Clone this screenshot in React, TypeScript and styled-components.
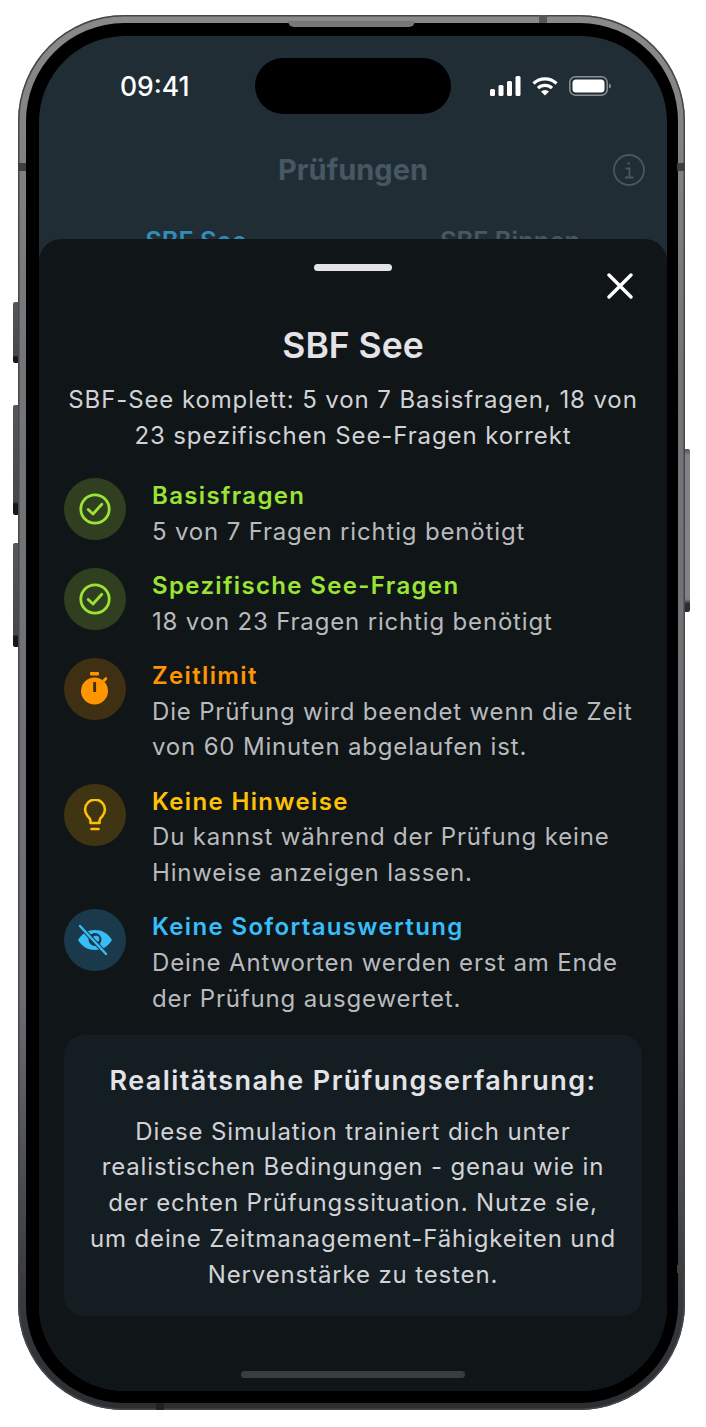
import React from "react";
import styled, { createGlobalStyle } from "styled-components";

const GlobalStyle = createGlobalStyle`
  html, body {
    margin: 0;
    padding: 0;
    background: #fff;
    font-family: "Inter", "Liberation Sans", sans-serif;
  }
`;

const GREEN = "#9be335";
const ORANGE = "#ff9500";
const YELLOW = "#ffc107";
const BLUE = "#38bdf8";
const MUTED = "#465862";

const CheckIcon = ({ color }: { color: string }) => (
  <svg width="32" height="32" viewBox="0 0 32 32" fill="none" stroke={color} strokeWidth="2.8" strokeLinecap="round" strokeLinejoin="round">
    <circle cx="16" cy="16" r="14.2" />
    <path d="M9.2 16.5 14 21l8.8-9.8" />
  </svg>
);

const TimerIcon = ({ color }: { color: string }) => (
  <svg width="32" height="36" viewBox="0 0 32 36">
    <rect x="11" y="1" width="9" height="3.400" rx="1" fill={color} />
    <circle cx="15.500" cy="20" r="13.500" fill={color} />
    <path d="m25 9.500 1.800-1.800" stroke={color} strokeWidth="3" strokeLinecap="round" />
    <rect x="14.200" y="11" width="2.900" height="10" fill="#3f3013" />
  </svg>
);

const BulbIcon = ({ color }: { color: string }) => (
  <svg width="24" height="32" viewBox="0 0 24 32" fill="none" stroke={color} strokeWidth="2.600" strokeLinecap="round" strokeLinejoin="round">
    <path d="M7.500 24v-2.200c0-1.800-1.200-3.200-3-4.800a9.900 9.900 0 1 1 15 0c-1.800 1.600-3 3-3 4.800V24Z" />
    <path d="M8.500 30h7" />
  </svg>
);

const EyeOffIcon = ({ color }: { color: string }) => (
  <svg width="36" height="32" viewBox="0 0 36 32">
    <path d="M1 16C5.500 9 11 6 18 6S30.500 9 35 16C30.500 23 25 26 18 26S5.500 23 1 16Z" fill={color} />
    <circle cx="18" cy="15.500" r="6.500" fill="#1a3a4b" />
    <circle cx="19" cy="15" r="3.300" fill={color} />
    <path d="M3 2 29 30" stroke="#1a3a4b" strokeWidth="4.400" />
    <path d="M3 2 29 30" stroke={color} strokeWidth="2.400" strokeLinecap="round" />
  </svg>
);

const InfoIcon = () => (
  <svg width="32" height="32" viewBox="0 0 32 32" fill="none" stroke={MUTED} strokeWidth="1.800">
    <circle cx="16" cy="16" r="15" />
    <path d="M12.500 14.500H16.500V23M12 23.500H20.500" />
    <circle cx="15.800" cy="9.500" r="1.300" fill={MUTED} stroke="none" />
  </svg>
);

const CloseIcon = () => (
  <svg width="26" height="26" viewBox="0 0 26 26" fill="none" stroke="#fff" strokeWidth="3.400" strokeLinecap="round">
    <path d="M2 2 24 24M24 2 2 24" />
  </svg>
);

const SignalIcon = () => (
  <svg width="31" height="20" viewBox="0 0 31 20" fill="#fff">
    <rect x="0" y="13" width="5" height="7" rx="1.500" />
    <rect x="8.500" y="9" width="5" height="11" rx="1.500" />
    <rect x="17" y="5" width="5" height="15" rx="1.500" />
    <rect x="25.500" y="0" width="5" height="20" rx="1.500" />
  </svg>
);

const WifiIcon = () => (
  <svg width="26" height="19" viewBox="0 0 26 19" fill="none" stroke="#fff" strokeWidth="3.200">
    <path d="M1.500 6.500a16.500 16.500 0 0 1 23 0" />
    <path d="M6 11.200a10 10 0 0 1 14 0" />
    <path d="M13 18.600 9 14.500a5.800 5.800 0 0 1 8 0Z" fill="#fff" stroke="none" />
  </svg>
);

const BatteryIcon = () => (
  <svg width="42" height="20" viewBox="0 0 42 20">
    <rect x="0.800" y="0.800" width="37.400" height="18.400" rx="5.500" fill="none" stroke="#8b9196" strokeWidth="1.500" />
    <rect x="3.500" y="3.500" width="32" height="13" rx="3.500" fill="#fff" />
    <path d="M40 7.500c1.300.4 2 1.300 2 2.500s-.7 2.100-2 2.500Z" fill="#8b9196" />
  </svg>
);

const rules = [
  { tone: GREEN, wash: "#303f20", icon: <CheckIcon color={GREEN} />, title: "Basisfragen", text: "5 von 7 Fragen richtig benötigt" },
  { tone: GREEN, wash: "#303f20", icon: <CheckIcon color={GREEN} />, title: "Spezifische See-Fragen", text: "18 von 23 Fragen richtig benötigt" },
  { tone: ORANGE, wash: "#3f3013", icon: <TimerIcon color={ORANGE} />, title: "Zeitlimit", text: "Die Prüfung wird beendet wenn die Zeit von 60 Minuten abgelaufen ist." },
  { tone: YELLOW, wash: "#403513", icon: <BulbIcon color={YELLOW} />, title: "Keine Hinweise", text: "Du kannst während der Prüfung keine Hinweise anzeigen lassen." },
  { tone: BLUE, wash: "#1a3a4b", icon: <EyeOffIcon color={BLUE} />, title: "Keine Sofortauswertung", text: "Deine Antworten werden erst am Ende der Prüfung ausgewertet." },
];

const App = () => {
  return (
    <Page>
      <GlobalStyle />
      <Frame>
        <VolumeKey $top={287} $height={61} />
        <VolumeKey $top={390} $height={110} />
        <VolumeKey $top={528} $height={104} />
        <PowerKey />
        <Speaker />
        <TopBand />
        <BottomBand />
        <Band $side="left" $top={148} />
        <Band $side="right" $top={148} />
        <Band $side="left" $top={1250} />
        <Band $side="right" $top={1250} />
        <Bezel>
          <Screen>
            <Island />
            <Backdrop>
              <StatusBar>
                <Clock>09:41</Clock>
                <StatusIcons>
                  <SignalIcon />
                  <WifiIcon />
                  <BatteryIcon />
                </StatusIcons>
              </StatusBar>
              <NavBar>
                <NavTitle>Prüfungen</NavTitle>
                <InfoSlot>
                  <InfoIcon />
                </InfoSlot>
              </NavBar>
              <Tabs>
                <Tab $active>SBF See</Tab>
                <Tab>SBF Binnen</Tab>
              </Tabs>
            </Backdrop>
            <Sheet>
              <Handle />
              <CloseButton>
                <CloseIcon />
              </CloseButton>
              <SheetTitle>SBF See</SheetTitle>
              <Intro>SBF-See komplett: 5 von 7 Basisfragen, 18 von 23 spezifischen See-Fragen korrekt</Intro>
              <RuleList>
                {rules.map((rule) => (
                  <Rule key={rule.title}>
                    <Badge $wash={rule.wash}>{rule.icon}</Badge>
                    <div>
                      <RuleTitle $tone={rule.tone}>{rule.title}</RuleTitle>
                      <RuleText>{rule.text}</RuleText>
                    </div>
                  </Rule>
                ))}
              </RuleList>
              <Callout>
                <CalloutTitle>Realitätsnahe Prüfungserfahrung:</CalloutTitle>
                <CalloutText>
                  Diese Simulation trainiert dich unter realistischen Bedingungen - genau wie in der echten
                  Prüfungssituation. Nutze sie, um deine Zeitmanagement-Fähigkeiten und Nervenstärke zu testen.
                </CalloutText>
              </Callout>
              <HomeIndicator />
            </Sheet>
          </Screen>
        </Bezel>
      </Frame>
    </Page>
  );
};

const Page = styled.div`
  width: 706px;
  height: 1427px;
  padding: 15px 0 0 18px;
  box-sizing: border-box;
  overflow: hidden;
`;

const Frame = styled.div`
  position: relative;
  width: 667px;
  height: 1395px;
  box-sizing: border-box;
  padding: 8px 7px 7px 8px;
  border-radius: 106px;
  background: linear-gradient(180deg, #8a8a8a 0%, #747577 25%, #6c6e71 70%, #3a3d40 90%, #2b2e30 100%);
  box-shadow: inset 0 0 0 1.500px #45474a;
`;

const Bezel = styled.div`
  height: 100%;
  box-sizing: border-box;
  padding: 13px 11px 12px 13px;
  border-radius: 98px;
  background: #000;
`;

const Screen = styled.div`
  position: relative;
  display: flex;
  flex-direction: column;
  height: 100%;
  border-radius: 86px;
  overflow: hidden;
  background: #212d35;
`;

const VolumeKey = styled.div<{ $top: number; $height: number }>`
  position: absolute;
  left: -5px;
  top: ${(p) => p.$top}px;
  width: 5px;
  height: ${(p) => p.$height}px;
  border-radius: 2px 0 0 2px;
  background: linear-gradient(180deg, #55585b 0%, #45484b 88%, #15181a 90%);
`;

const PowerKey = styled.div`
  position: absolute;
  right: -5px;
  top: 434px;
  width: 5px;
  height: 163px;
  border-radius: 0 2px 2px 0;
  background: linear-gradient(180deg, #505356 0%, #808285 4%, #808285 92%, #2c2f31 95%);
`;

const Speaker = styled.div`
  position: absolute;
  left: 270px;
  top: 6px;
  width: 127px;
  height: 6px;
  border-radius: 0 0 6px 6px;
  background: #77787a;
`;

const Band = styled.div<{ $side: "left" | "right"; $top: number }>`
  position: absolute;
  ${(p) => p.$side}: 0;
  top: ${(p) => p.$top}px;
  width: 8px;
  height: 8px;
  background: #3d3f41;
`;

const TopBand = styled.div`
  position: absolute;
  left: 521px;
  top: 0;
  width: 8px;
  height: 8px;
  background: #55575a;
`;

const BottomBand = styled.div`
  position: absolute;
  left: 138px;
  bottom: 0;
  width: 8px;
  height: 7px;
  background: #1f2123;
`;

const Island = styled.div`
  position: absolute;
  left: 216px;
  top: 22px;
  width: 196px;
  height: 56px;
  border-radius: 28px;
  background: #000;
`;

const Backdrop = styled.div`
  flex: 0 0 203px;
  overflow: hidden;
`;

const StatusBar = styled.div`
  display: flex;
  align-items: center;
  justify-content: space-between;
  height: 44px;
  padding: 28px 56px 0 81px;
`;

const Clock = styled.span`
  color: #fff;
  font-size: 26.500px;
  font-weight: 500;
`;

const StatusIcons = styled.div`
  display: flex;
  align-items: center;
  gap: 11px;
`;

const NavBar = styled.div`
  position: relative;
  display: flex;
  justify-content: center;
  margin-top: 42px;
`;

const NavTitle = styled.h1`
  margin: 0;
  color: ${MUTED};
  font-size: 29px;
  line-height: 40px;
  font-weight: 700;
`;

const InfoSlot = styled.div`
  position: absolute;
  right: 22px;
  top: 4px;
  display: flex;
`;

const Tabs = styled.div`
  display: grid;
  grid-template-columns: 314px 314px;
  margin-top: 36px;
`;

const Tab = styled.div<{ $active?: boolean }>`
  color: ${(p) => (p.$active ? "#2f8fb8" : MUTED)};
  font-size: 25.500px;
  font-weight: 600;
  line-height: 30px;
  text-align: center;
`;

const Sheet = styled.div`
  position: relative;
  flex: 1;
  display: flex;
  flex-direction: column;
  padding: 25px 25px 0;
  border-radius: 22px 22px 0 0;
  background: #101518;
`;

const Handle = styled.div`
  align-self: center;
  width: 78px;
  height: 7px;
  border-radius: 4px;
  background: #e4e4e8;
`;

const CloseButton = styled.div`
  position: absolute;
  right: 34px;
  top: 34px;
  display: flex;
`;

const SheetTitle = styled.h2`
  margin: 55px 0 0;
  color: #e4e4e8;
  font-size: 35.500px;
  line-height: 40px;
  font-weight: 600;
  text-align: center;
`;

const Intro = styled.p`
  margin: 16px -6px 0;
  color: #d2d2d6;
  font-size: 24px;
  line-height: 35.800px;
  letter-spacing: 0.900px;
  text-align: center;
`;

const RuleList = styled.div`
  display: flex;
  flex-direction: column;
  gap: 18.300px;
  margin-top: 24.500px;
`;

const Rule = styled.div`
  display: flex;
  gap: 26px;
`;

const Badge = styled.div<{ $wash: string }>`
  flex: 0 0 62px;
  height: 62px;
  display: flex;
  align-items: center;
  justify-content: center;
  border-radius: 50%;
  background: ${(p) => p.$wash};
`;

const RuleTitle = styled.div<{ $tone: string }>`
  color: ${(p) => p.$tone};
  font-size: 24px;
  line-height: 35.800px;
  font-weight: 600;
  letter-spacing: 1.350px;
`;

const RuleText = styled.div`
  color: #b9babd;
  font-size: 24px;
  line-height: 35.800px;
  letter-spacing: 0.830px;
`;

const Callout = styled.div`
  margin-top: 18px;
  height: 281px;
  box-sizing: border-box;
  padding: 28px 24px 0;
  border-radius: 20px;
  background: #141d22;
  text-align: center;
`;

const CalloutTitle = styled.div`
  margin: 0 -10px;
  color: #e4e4e8;
  font-size: 27px;
  line-height: 36px;
  font-weight: 600;
  letter-spacing: 1.400px;
  white-space: nowrap;
`;

const CalloutText = styled.p`
  margin: 15px 0 0;
  color: #d2d2d6;
  font-size: 24px;
  line-height: 35.800px;
  letter-spacing: 0.860px;
`;

const HomeIndicator = styled.div`
  position: absolute;
  left: 202px;
  bottom: 13px;
  width: 224px;
  height: 7px;
  border-radius: 4px;
  background: #3a3d3f;
`;

export default App;
